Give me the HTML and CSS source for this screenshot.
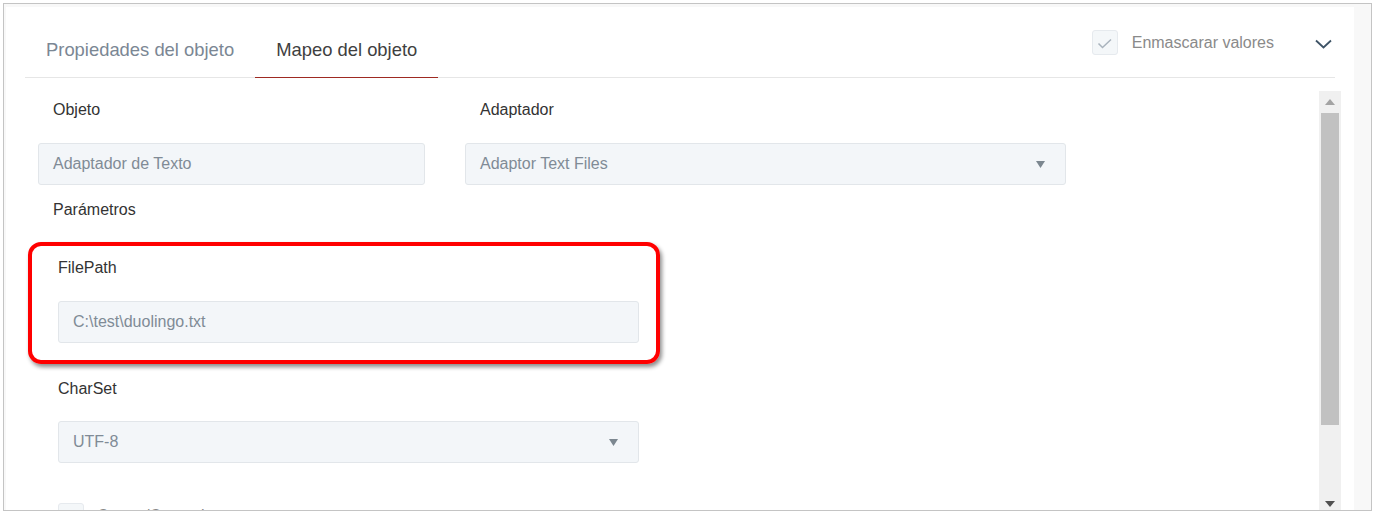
FILE: index.html
```html
<!DOCTYPE html>
<html lang="es">
<head>
<meta charset="utf-8">
<title>Mapeo del objeto</title>
<link rel="stylesheet" href="styles.css">
</head>
<body>
<div class="frame">
  <div class="panel">
    <div class="header">
      <div class="tabs">
        <div class="tab">Propiedades del objeto</div>
        <div class="tab active">Mapeo del objeto</div>
      </div>
      <div class="tools">
        <div class="mask">
          <span class="cb"><svg width="26" height="25" viewBox="0 0 26 25"><polyline points="6.5,13.5 10.5,17.5 19,9.5" fill="none" stroke="#a9b3bd" stroke-width="1.5"/></svg></span>
          <span class="mask-text">Enmascarar valores</span>
        </div>
        <span class="chev"><svg width="17" height="10" viewBox="0 0 17 10"><polyline points="1,1.5 8.5,8.5 16,1.5" fill="none" stroke="#3e5366" stroke-width="1.8"/></svg></span>
      </div>
    </div>
    <div class="body">
      <div class="content">
        <div class="row">
          <div class="field f1">
            <div class="label">Objeto</div>
            <div class="input">Adaptador de Texto</div>
          </div>
          <div class="field f2">
            <div class="label">Adaptador</div>
            <div class="input select">Adaptor Text Files<span class="caret"><svg width="9" height="7" viewBox="0 0 9 7"><polygon points="0,0 9,0 4.5,7" fill="#7c8790"/></svg></span></div>
          </div>
        </div>
        <div class="label section">Parámetros</div>
        <div class="params">
          <div class="param highlight">
            <div class="plabel">FilePath</div>
            <div class="input">C:\test\duolingo.txt</div>
          </div>
          <div class="param charset">
            <div class="plabel">CharSet</div>
            <div class="input select">UTF-8<span class="caret"><svg width="9" height="7" viewBox="0 0 9 7"><polygon points="0,0 9,0 4.5,7" fill="#7c8790"/></svg></span></div>
          </div>
          <div class="check-row">
            <span class="cb"><svg width="26" height="25" viewBox="0 0 26 25"><polyline points="6.5,13.5 10.5,17.5 19,9.5" fill="none" stroke="#a9b3bd" stroke-width="1.5"/></svg></span>
            <span class="check-text">Create/Overwrite</span>
          </div>
        </div>
      </div>
      <div class="scrollbar">
        <div class="sb-btn"><svg width="10" height="6" viewBox="0 0 10 6"><polygon points="0,6 10,6 5,0" fill="#a3a3a3"/></svg></div>
        <div class="sb-thumb"></div>
        <div class="sb-space"></div>
        <div class="sb-btn"><svg width="10" height="6" viewBox="0 0 10 6"><polygon points="0,0 10,0 5,6" fill="#505050"/></svg></div>
      </div>
    </div>
  </div>
</div>
</body>
</html>
```

FILE: styles.css
```css
* { box-sizing: border-box; }
html, body { margin: 0; padding: 0; background: #ffffff; }
body {
  font-family: "Liberation Sans", Arial, sans-serif;
  font-size: 16px;
  color: #333;
}
.frame {
  margin: 3px 0 0 3px;
  width: 1369px;
  height: 508px;
  border: 1px solid #c4c4c4;
  background: #f8f8f8;
  padding: 3px 17px 0 2px;
  overflow: hidden;
}
.panel {
  background: #fff;
  height: 100%;
  display: flex;
  flex-direction: column;
}
.header {
  display: flex;
  justify-content: space-between;
  align-items: flex-start;
  margin: 0 19px;
  height: 71px;
  border-bottom: 1px solid #e6e6e6;
  flex: none;
}
.tabs { display: flex; }
.tab {
  height: 71px;
  padding: 31px 21px 0;
  font-size: 18.4px;
  line-height: 24px;
  color: #7b8794;
  white-space: nowrap;
}
.tab.active {
  color: #3f3f3f;
  border-bottom: 1px solid #9e2a22;
}
.tools {
  display: flex;
  align-items: center;
  margin-top: 23px;
  margin-right: 3px;
}
.mask { display: flex; align-items: center; }
.cb {
  width: 26px;
  height: 25px;
  border: 1px solid #e6eaee;
  border-radius: 3px;
  background: #f4f7f9;
  display: block;
  position: relative;
}
.cb svg { position: absolute; left: -1px; top: -1px; }
.mask-text {
  margin-left: 14px;
  color: #8a8a8a;
  line-height: 20px;
}
.chev { display: block; margin-left: 41px; height: 10px; margin-top: 2px; }
.chev svg { display: block; }
.body {
  flex: 1;
  display: flex;
  min-height: 0;
  overflow: hidden;
}
.content {
  flex: 1;
  padding: 22px 0 0 32px;
  overflow: hidden;
}
.row { display: flex; gap: 40px; }
.f1 { width: 387px; }
.f2 { width: 601px; }
.label {
  line-height: 20px;
  padding-left: 15px;
  color: #333;
}
.field .label { margin-bottom: 23px; }
.input {
  height: 42px;
  border: 1px solid #e2e6ea;
  border-radius: 3px;
  background: #f3f6f9;
  color: #808b96;
  padding: 0 14px;
  line-height: 40px;
  display: flex;
  align-items: center;
  justify-content: space-between;
}
.caret { display: block; width: 9px; height: 7px; margin-right: 6px; }
.caret svg { display: block; }
.section { margin-top: 15px; }
.params { margin-left: 20px; width: 581px; }
.param { margin-top: 38px; }
.param.charset { margin-top: 36px; }
.plabel { line-height: 20px; margin-bottom: 23px; color: #333; }
.charset .plabel { margin-bottom: 22px; }
.highlight { position: relative; }
.highlight::after {
  content: "";
  position: absolute;
  left: -30px;
  right: -21px;
  top: -16px;
  bottom: -21px;
  border: 4px solid #ff0000;
  border-radius: 13px;
  box-shadow: 2px 3px 4px rgba(0, 0, 0, 0.45);
  pointer-events: none;
}
.check-row {
  display: flex;
  align-items: center;
  margin-top: 40px;
}
.check-text { margin-left: 13px; color: #8a8a8a; line-height: 20px; }
.scrollbar {
  flex: none;
  width: 22px;
  height: 424px;
  margin: 13px 13px 0 0;
  background: #f0f0f0;
  display: flex;
  flex-direction: column;
}
.sb-btn {
  height: 22px;
  display: flex;
  align-items: center;
  justify-content: center;
  flex: none;
}
.sb-btn svg { display: block; }
.sb-thumb {
  height: 312px;
  margin: 0 2px;
  background: #c1c1c1;
  flex: none;
}
.sb-space { flex: 1; }
```
